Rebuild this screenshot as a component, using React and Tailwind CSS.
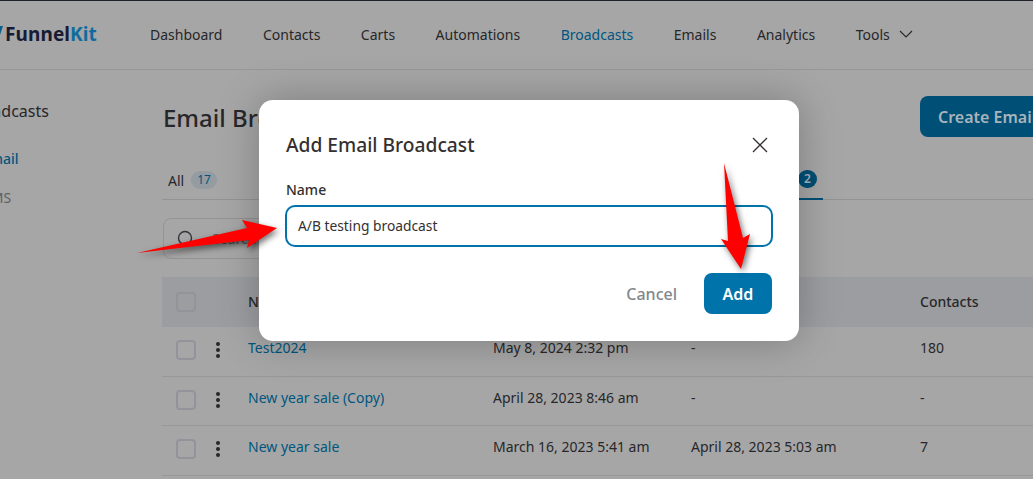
import React from "react";

const nav = [
  ["Dashboard", false],
  ["Contacts", false],
  ["Carts", false],
  ["Automations", false],
  ["Broadcasts", true],
  ["Emails", false],
  ["Analytics", false],
];

const rows = [
  ["Test2024", "May 8, 2024 2:32 pm", "-", "180"],
  ["New year sale (Copy)", "April 28, 2023 8:46 am", "-", "-"],
  ["New year sale", "March 16, 2023 5:41 am", "April 28, 2023 5:03 am", "7"],
];

function Box() {
  return <span className="block w-5 h-5 rounded-[4px] border-2 border-[#93949b]" />;
}

function Dots() {
  return (
    <span className="flex flex-col gap-[2px] items-center w-[6px]">
      <i className="block w-1 h-1 rounded-full bg-[#27272a]" />
      <i className="block w-1 h-1 rounded-full bg-[#27272a]" />
      <i className="block w-1 h-1 rounded-full bg-[#27272a]" />
    </span>
  );
}

function Arrow({ className, points }) {
  return (
    <svg className={className} viewBox="0 0 1033 479" width="1033" height="479" fill="#fe0000">
      <polygon points={points} style={{ filter: "drop-shadow(2px 3px 3px rgba(0,0,0,.55))" }} />
    </svg>
  );
}

export default function App() {
  return (
    <div className="relative w-[1033px] h-[479px] overflow-hidden bg-[#a6a6a6] text-[#27272a] font-['Noto_Sans',sans-serif] text-[14px]">
      <div className="h-px bg-[#1d2129]" />
      <header className="h-[69px] border-b border-[#979797] flex items-center pb-[2px]">
        <div className="w-[153px] shrink-0 flex items-center gap-[2px] -ml-[3px]">
          <svg width="6" height="9" viewBox="0 0 6 9" className="mb-[8px]"><path d="M0 0h6L3 9z" fill="#0f5f8c" /></svg>
          <span className="text-[19px] leading-none font-bold tracking-[0.1px]">
            <span className="text-[#171b35]">Funnel</span>
            <span className="text-[#0f6c9f]">Kit</span>
          </span>
        </div>
        <nav className="flex items-center gap-[40.5px]">
          {nav.map(([t, a]) => (
            <span key={t} className={a ? "text-[#00567f]" : ""}>{t}</span>
          ))}
          <span className="flex items-center gap-[9px]">
            Tools
            <svg width="14" height="8" viewBox="0 0 14 8" fill="none" stroke="#27272a" strokeWidth="1.1"><path d="M1 1l6 6 6-6" /></svg>
          </span>
        </nav>
      </header>
      <div className="flex">
        <aside className="w-[194px] shrink-0 -ml-[33px] box-content pt-[30px]">
          <div className="text-[16px] leading-[22px] -ml-px">Broadcasts</div>
          <div className="mt-[26px] font-medium text-[#00567f] pl-[15px]">Email</div>
          <div className="mt-[18px] text-[#5f5f5f] pl-[16px]">SMS</div>
        </aside>
        <main className="w-[1000px] shrink-0 pl-px">
          <div className="flex items-start justify-between pt-[26px] h-[89px]">
            <h1 className="text-[24px] leading-[44px] font-medium ml-px">Email Broadcasts</h1>
            <button className="mr-[41px] w-[200px] h-[41px] rounded-[8px] bg-[#004f76] text-[#a8b4bb] text-[16px] font-semibold text-left pl-[18px]">Create Email Broadcast</button>
          </div>
          <div className="relative h-[41px] border-b border-[#939393] flex items-center pl-[6px] pt-[2px] w-[871px]">
            <span>All</span>
            <span className="ml-[7px] rounded-full bg-[#949ca1] px-[6px] text-[12px] leading-[18px] text-[#00567f]">17</span>
            <span className="absolute left-[636px] top-[11px] rounded-full bg-[#004f76] px-[6px] text-[12px] leading-[18px] font-semibold text-[#a8b4bb]">2</span>
            <span className="absolute left-[610px] w-[51px] -bottom-px h-[2px] bg-[#004f76]" />
          </div>
          <div className="mt-[18px] ml-px w-[300px] h-[41px] rounded-[8px] border border-[#949494] flex items-center pl-[13px] gap-[18px]">
            <svg width="17" height="17" viewBox="0 0 17 17" fill="none" stroke="#33343a" strokeWidth="1.4"><circle cx="8" cy="8" r="6.5" /><path d="M13 13l3 3" /></svg>
            <span className="text-[#5f5f5f]">Search</span>
          </div>
          <div className="mt-[18px] h-[50px] bg-[#9c9da0] flex items-center font-medium">
            <span className="w-[86px] pl-[14px]"><Box /></span>
            <span className="w-[672px] pb-[2px]">Name</span>
            <span className="pb-[2px]">Contacts</span>
          </div>
          {rows.map((r) => (
            <div key={r[0]} className="h-[49.5px] border-b border-[#989898] flex items-center pb-[2px]">
              <span className="w-[53px] pl-[14px]"><Box /></span>
              <span className="w-[33px]"><Dots /></span>
              <span className="w-[245px] text-[#00567f] pb-[5px]">{r[0]}</span>
              <span className="w-[198px] pb-[5px]">{r[1]}</span>
              <span className="w-[229px] pb-[5px]">{r[2]}</span>
              <span className="pb-[5px]">{r[3]}</span>
            </div>
          ))}
        </main>
      </div>

      <div className="absolute left-[259px] top-[100px] w-[540px] h-[241px] rounded-[14px] bg-white shadow-[0_0_40px_rgba(0,0,0,0.25)] px-[26px]">
        <div className="flex items-center justify-between pl-px pt-[30px] pr-[5px]">
          <h2 className="text-[19.2px] leading-[30px] font-medium text-[#353030]">Add Email Broadcast</h2>
          <svg width="16" height="16" viewBox="0 0 16 16" fill="none" stroke="#353030" strokeWidth="1.3"><path d="M1 1l14 14M15 1L1 15" /></svg>
        </div>
        <label className="block mt-[20px] pl-px leading-[20px] font-medium text-[#353030]">Name</label>
        <div className="mt-[5px] h-[42px] w-[488px] rounded-[10px] border-2 border-[#0073aa] flex items-center pl-[11px] text-[13.8px] text-[#353030]">A/B testing broadcast</div>
        <div className="mt-[26px] flex items-center justify-end gap-[27px] pr-px">
          <span className="text-[16px] font-medium text-[#82878c]">Cancel</span>
          <button className="w-[68px] h-[41px] rounded-[8px] bg-[#0073aa] text-white text-[16px] font-semibold">Add</button>
        </div>
      </div>

      <Arrow className="absolute left-0 top-0" points="137,253 247,228 242,220 277,228 247,248 249,240" />
      <Arrow className="absolute left-0 top-0" points="724,163 743,238 750,234 741,269 721,239 728,241" />
    </div>
  );
}
